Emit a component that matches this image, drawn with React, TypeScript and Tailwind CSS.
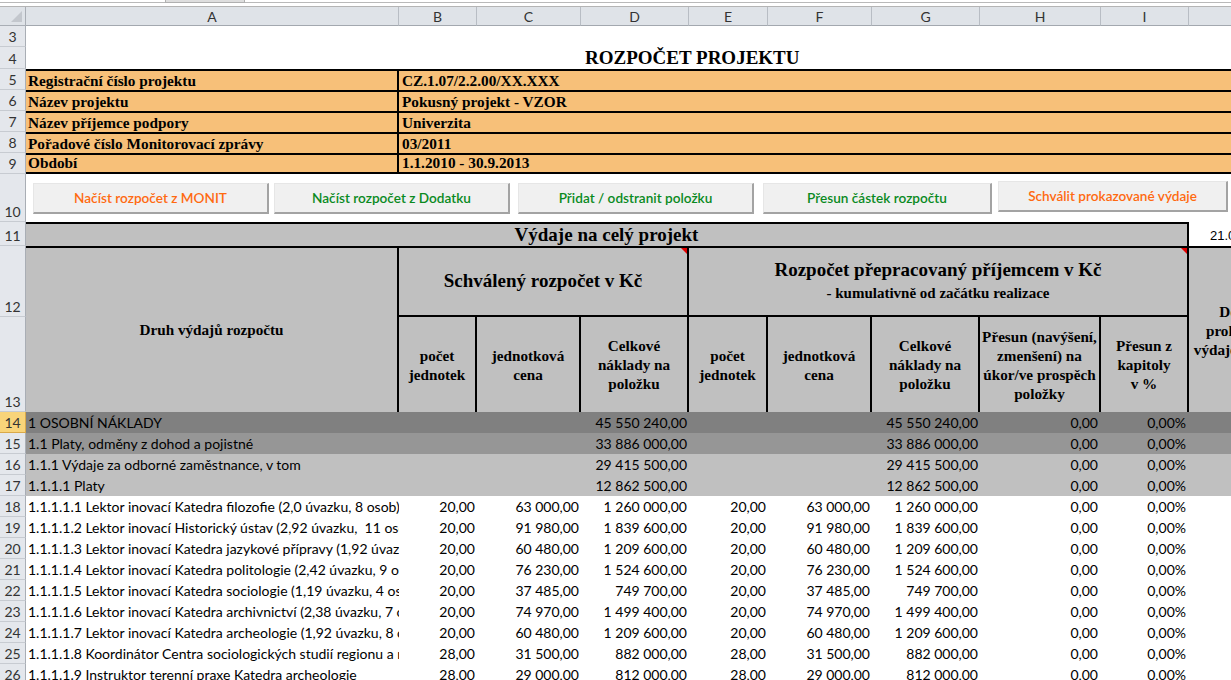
import React from 'react';

const serif = "font-['Liberation_Serif',serif] font-bold text-black";
const sans = "font-['Lato',sans-serif]";
const orange = 'bg-[#f7c079]';

const letters = ['A', 'B', 'C', 'D', 'E', 'F', 'G', 'H', 'I', 'J'];

type Row = { n: number; label: string; bg: string; v: string[] };

const groupRows: Row[] = [
  { n: 14, label: '1 OSOBNÍ NÁKLADY', bg: 'bg-[#808080]', v: ['', '', '45 550 240,00', '', '', '45 550 240,00', '0,00', '0,00%'] },
  { n: 15, label: '1.1 Platy, odměny z dohod a pojistné', bg: 'bg-[#969696]', v: ['', '', '33 886 000,00', '', '', '33 886 000,00', '0,00', '0,00%'] },
  { n: 16, label: '1.1.1 Výdaje za odborné zaměstnance, v tom', bg: 'bg-[#c0c0c0]', v: ['', '', '29 415 500,00', '', '', '29 415 500,00', '0,00', '0,00%'] },
  { n: 17, label: '1.1.1.1 Platy', bg: 'bg-[#c0c0c0]', v: ['', '', '12 862 500,00', '', '', '12 862 500,00', '0,00', '0,00%'] },
];

// label, pocet jednotek, jednotkova cena, celkem
const items: [string, string, string, string][] = [
  ['1.1.1.1.1 Lektor inovací Katedra filozofie (2,0 úvazku, 8 osob)', '20,00', '63 000,00', '1 260 000,00'],
  ['1.1.1.1.2 Lektor inovací Historický ústav (2,92 úvazku,  11 osob)', '20,00', '91 980,00', '1 839 600,00'],
  ['1.1.1.1.3 Lektor inovací Katedra jazykové přípravy (1,92 úvazku, 8 osob)', '20,00', '60 480,00', '1 209 600,00'],
  ['1.1.1.1.4 Lektor inovací Katedra politologie (2,42 úvazku, 9 osob)', '20,00', '76 230,00', '1 524 600,00'],
  ['1.1.1.1.5 Lektor inovací Katedra sociologie (1,19 úvazku, 4 osoby)', '20,00', '37 485,00', '749 700,00'],
  ['1.1.1.1.6 Lektor inovací Katedra archivnictví (2,38 úvazku, 7 osob)', '20,00', '74 970,00', '1 499 400,00'],
  ['1.1.1.1.7 Lektor inovací Katedra archeologie (1,92 úvazku, 8 osob)', '20,00', '60 480,00', '1 209 600,00'],
  ['1.1.1.1.8 Koordinátor Centra sociologických studií regionu a reflexe', '28,00', '31 500,00', '882 000,00'],
  ['1.1.1.1.9 Instruktor terenní praxe Katedra archeologie', '28,00', '29 000,00', '812 000,00'],
];

const dataRows: Row[] = [
  ...groupRows,
  ...items.map(([label, ks, cena, celk], i) => ({
    n: 18 + i,
    label,
    bg: 'bg-white',
    v: [ks, cena, celk, ks, cena, celk, '0,00', '0,00%'],
  })),
];

function RH({ n, active }: { n?: number; active?: boolean }) {
  return (
    <div
      className={`flex items-end justify-center pb-[1px] border-b border-r text-[14px] leading-[16px] text-[#333] ${sans} ${
        active ? 'bg-[#f8d47a] border-b-[#d9a94a] border-r-[#d9a94a]' : 'bg-[#e4e7ec] border-b-[#c7cbd1] border-r-[#a9aeb5]'
      }`}
    >
      {n}
    </div>
  );
}

// red comment marker in the corner of a cell
function Flag() {
  return (
    <svg className="absolute right-0 top-0" width="6" height="6" viewBox="0 0 6 6">
      <polygon points="0,0 6,0 6,6" fill="#e00000" />
    </svg>
  );
}

function Btn({ label, color, className = '' }: { label: string; color: string; className?: string }) {
  return (
    <div
      className={`h-[31px] flex items-center justify-center bg-[#f0f0f0] border-t border-l border-t-[#e6e6e6] border-l-[#e6e6e6] border-r-2 border-b-2 border-r-[#a3a3a3] border-b-[#a3a3a3] text-[13.6px] font-semibold ${sans} ${color} ${className}`}
    >
      {label}
    </div>
  );
}

function InfoRow({ n, label, value, last }: { n: number; label: string; value: string; last?: boolean }) {
  const b = last ? 'border-b-2' : '';
  return (
    <>
      <RH n={n} />
      <div className={`${orange} border-t-2 border-r-2 border-black ${b} flex items-end pl-[2px] text-[15.3px] leading-[18px] whitespace-nowrap ${serif}`}>
        {label}
      </div>
      <div className={`col-span-9 ${orange} border-t-2 border-black ${b} flex items-end pl-[3px] text-[15.3px] leading-[18px] ${serif}`}>
        {value}
      </div>
    </>
  );
}

function SubHead({ children }: { children: React.ReactNode }) {
  return (
    <div className={`bg-[#c0c0c0] border-r-2 border-black flex items-center justify-center whitespace-nowrap text-[15.2px] leading-[19px] ${serif}`}>
      <div className="text-center">{children}</div>
    </div>
  );
}

export default function App() {
  return (
    <div className="w-[1231px] h-[680px] overflow-hidden bg-white">
      {/* strip above the sheet */}
      <div className="h-[7px] bg-white border-b border-[#b4b4b4] relative">
        <div className="absolute left-0 right-0 top-[2px] h-px bg-[#b9b9b9]" />
        <div className="absolute left-[165px] w-[80px] top-0 h-[3px] bg-[#dedede] border-x border-b border-[#b0b0b0]" />
      </div>

      <div className="grid grid-cols-[26px_373px_78px_104px_108px_79px_104px_108px_121px_88px_102px] grid-rows-[19px_21px_22px_21px_21px_21px_21px_21px_48px_24px_71px_95px_repeat(13,21px)] w-[1291px]">
        {/* column headers */}
        <div className="relative bg-[#dfe3e8] border-r border-b border-[#a9aeb5]">
          <svg className="absolute right-[3px] bottom-[3px]" width="11" height="11" viewBox="0 0 11 11">
            <polygon points="11,0 11,11 0,11" fill="#c3c7cd" />
          </svg>
        </div>
        {letters.map((l) => (
          <div
            key={l}
            className={`flex items-center justify-center bg-[#dfe3e8] border-r border-b border-r-[#b8bdc4] border-b-[#a3a8af] text-[14px] text-[#333] ${sans}`}
          >
            {l}
          </div>
        ))}

        {/* row 3 */}
        <RH n={3} />
        <div className="col-span-10" />

        {/* row 4 - title */}
        <RH n={4} />
        <div className={`col-span-10 flex items-end pl-[559px] pb-[1px] text-[19px] leading-[20px] ${serif}`}>ROZPOČET PROJEKTU</div>

        <InfoRow n={5} label="Registrační číslo projektu" value="CZ.1.07/2.2.00/XX.XXX" />
        <InfoRow n={6} label="Název projektu" value="Pokusný projekt - VZOR" />
        <InfoRow n={7} label="Název příjemce podpory" value="Univerzita" />
        <InfoRow n={8} label="Pořadové číslo Monitorovací zprávy" value="03/2011" />
        <InfoRow n={9} label="Období" value="1.1.2010 - 30.9.2013" last />

        {/* row 10 - buttons */}
        <RH n={10} />
        <div className="col-span-10 flex items-start pt-[9px]">
          <Btn label="Načíst rozpočet z MONIT" color="text-[#ff6a10]" className="ml-[7px] w-[236px]" />
          <Btn label="Načíst rozpočet z Dodatku" color="text-[#0a8a1e]" className="ml-[5px] w-[236px]" />
          <Btn label="Přidat / odstranit položku" color="text-[#0a8a1e]" className="ml-[8px] w-[236px]" />
          <Btn label="Přesun částek rozpočtu" color="text-[#0a8a1e]" className="ml-[9px] w-[229px]" />
          <Btn label="Schválit prokazované výdaje" color="text-[#ff6a10]" className="ml-[6px] w-[230px] -mt-[2px]" />
        </div>

        {/* row 11 */}
        <RH n={11} />
        <div className={`col-span-9 bg-[#c0c0c0] border-t-2 border-r-2 border-black flex items-center justify-center text-[19px] ${serif}`}>
          Výdaje na celý projekt
        </div>
        <div className="flex items-end pl-[21px] pb-[1px] whitespace-nowrap text-[13px] font-['Liberation_Sans',sans-serif] text-black">21.06.2013</div>

        {/* row 12 */}
        <RH n={12} />
        <div className={`row-span-2 bg-[#c0c0c0] border-t-2 border-r-2 border-black flex items-center justify-center text-[15.2px] ${serif}`}>
          Druh výdajů rozpočtu
        </div>
        <div className={`relative col-span-3 bg-[#c0c0c0] border-t-2 border-r-2 border-b-2 border-black flex items-center justify-center text-[19px] ${serif}`}>
          Schválený rozpočet v Kč
          <Flag />
        </div>
        <div className={`relative col-span-5 bg-[#c0c0c0] border-t-2 border-r-2 border-b-2 border-black flex flex-col items-center justify-center pb-[2px] ${serif}`}>
          <div className="text-[19px] leading-[25px]">Rozpočet přepracovaný příjemcem v Kč</div>
          <div className="text-[15px] leading-[22px]">- kumulativně od začátku realizace</div>
          <Flag />
        </div>
        <div className={`row-span-2 bg-[#c0c0c0] border-t-2 border-black flex items-center justify-center whitespace-nowrap text-[15.2px] leading-[19px] ${serif}`}>
          <div className="text-center">
            Dosud
            <br />
            prokázané
            <br />
            výdaje celkem
          </div>
        </div>

        {/* row 13 */}
        <RH n={13} />
        <SubHead>počet<br />jednotek</SubHead>
        <SubHead>jednotková<br />cena</SubHead>
        <SubHead>Celkové<br />náklady na<br />položku</SubHead>
        <SubHead>počet<br />jednotek</SubHead>
        <SubHead>jednotková<br />cena</SubHead>
        <SubHead>Celkové<br />náklady na<br />položku</SubHead>
        <SubHead>Přesun (navýšení,<br />zmenšení) na<br />úkor/ve prospěch<br />položky</SubHead>
        <SubHead>Přesun z<br />kapitoly<br />v %</SubHead>

        {/* data rows */}
        {dataRows.map((r) => (
          <React.Fragment key={r.n}>
            <RH n={r.n} active={r.n === 14} />
            <div className={`${r.bg} flex items-end pl-[2px] pb-[1px] overflow-hidden whitespace-pre text-[14px] leading-[18px] text-black ${sans}`}>
              {r.label}
            </div>
            {r.v.map((v, i) => (
              <div
                key={i}
                className={`${r.bg} flex items-end justify-end pb-[1px] ${i >= 6 ? 'pr-[3px]' : 'pr-[2px]'} whitespace-nowrap text-[14px] leading-[18px] text-black ${sans}`}
              >
                {v}
              </div>
            ))}
            <div className={r.bg} />
          </React.Fragment>
        ))}
      </div>
    </div>
  );
}
